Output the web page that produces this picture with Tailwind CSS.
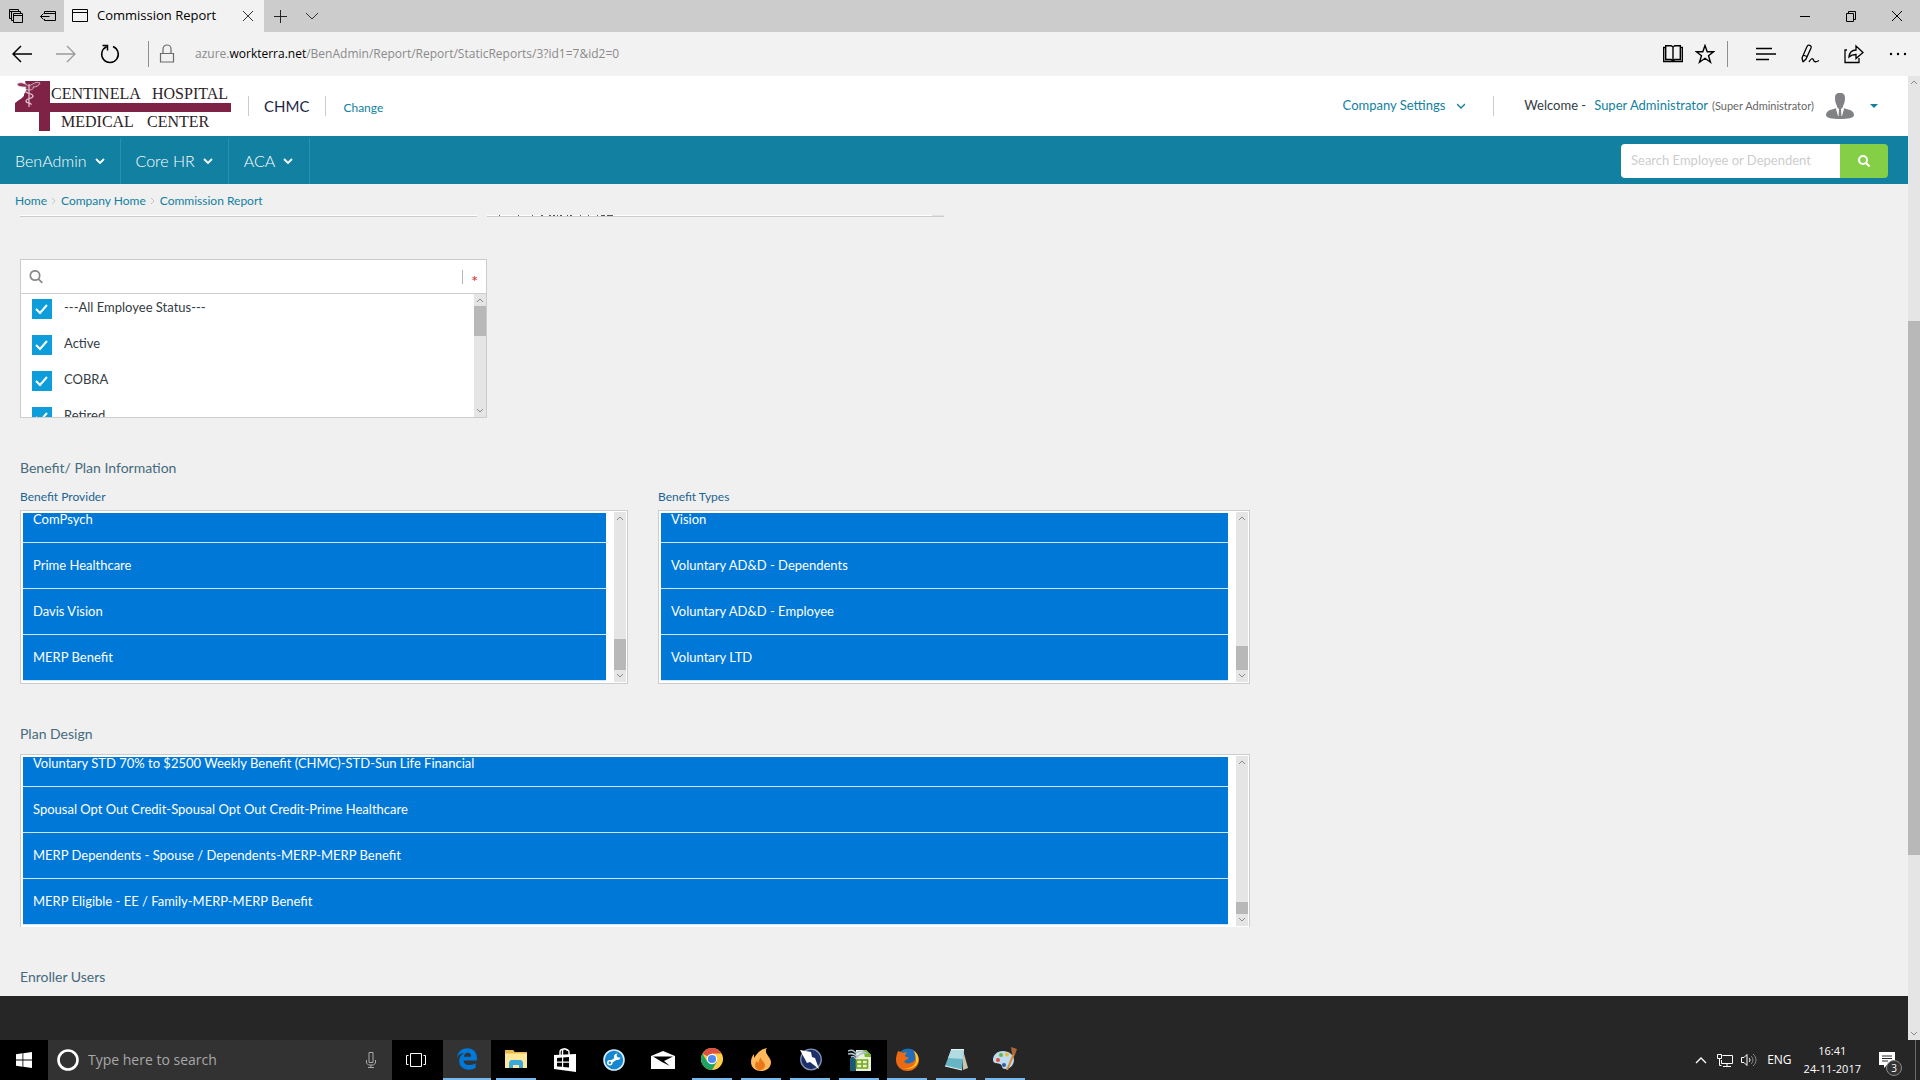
<!DOCTYPE html>
<html lang="en">
	<head>
		<meta charset="UTF-8" />
		<title>Commission Report</title>
		<script src="https://cdn.jsdelivr.net/npm/@tailwindcss/browser@4"></script>
	</head>
	<body class="h-screen flex flex-col overflow-hidden bg-[#f0f0f0] font-['Lato',sans-serif] text-[13px] text-[#333c44]">
		<!-- Browser tabs -->
		<div class="h-8 shrink-0 flex items-center bg-[#cccccc] text-black font-['Open_Sans',sans-serif]">
			<div class="w-16 flex items-center justify-between pl-2 pr-2">
				<button aria-label="Tabs you've set aside">
					<svg class="w-4 h-4" viewBox="0 0 16 16" fill="none" stroke="currentColor"><path d="M3.500 10.500h-2v-9h9v2M1 3.500h10M5.500 12.500h-2v-9h9v2" /><path d="M5.500 5.500h9v9h-9zM5 7.500h10" /></svg>
				</button>
				<button aria-label="Set these tabs aside">
					<svg class="w-4 h-4" viewBox="0 0 16 16" fill="none" stroke="currentColor"><path d="M4.500 6V3.500h11v9h-11V11M4 5.500h12M.5 8.500h9M3.500 5.500l-3 3 3 3" /></svg>
				</button>
			</div>
			<div class="w-[200px] h-full flex items-center bg-[#f2f2f2] pl-2 pr-2">
				<svg class="w-4 h-4" viewBox="0 0 16 16" fill="none" stroke="currentColor"><path d="M.5 1.500h15v12H.5zM0 4.500h16" /></svg>
				<span class="ml-[9px] flex-1 whitespace-nowrap">Commission Report</span>
				<button aria-label="Close tab"><svg class="w-4 h-4" viewBox="0 0 16 16" fill="none" stroke="#333"><path d="M3 3l10 10M13 3L3 13" /></svg></button>
			</div>
			<button class="ml-2" aria-label="New tab"><svg class="w-4 h-4" viewBox="0 0 16 16" fill="none" stroke="#222"><path d="M8.500 2v13M2 8.500h13" /></svg></button>
			<button class="ml-4" aria-label="Show tab previews"><svg class="w-4 h-4" viewBox="0 0 16 16" fill="none" stroke="#333"><path d="M2 5l6 6 6-6" /></svg></button>
			<div class="ml-auto flex items-center gap-[30px] pr-[15px]">
				<button aria-label="Minimize"><svg class="w-4 h-4" viewBox="0 0 16 16" stroke="currentColor"><path d="M3 8.500h10" /></svg></button>
				<button aria-label="Restore"><svg class="w-4 h-4" viewBox="0 0 16 16" fill="none" stroke="currentColor"><path d="M3.500 5.500h7v8h-7zM5.500 5V3.500h7v8H11" /></svg></button>
				<button aria-label="Close"><svg class="w-4 h-4" viewBox="0 0 16 16" stroke="currentColor"><path d="M3 3l10 10M13 3L3 13" /></svg></button>
			</div>
		</div>

		<!-- Address bar -->
		<div class="h-11 shrink-0 flex items-center bg-[#f2f2f2] text-black pl-3 pr-3 font-['Open_Sans',sans-serif]">
			<button aria-label="Back"><svg class="w-5 h-5" viewBox="0 0 20 20" fill="none" stroke="currentColor" stroke-width="1.500"><path d="M1 10h19M9 2l-8 8 8 8" /></svg></button>
			<button class="ml-6" aria-label="Forward"><svg class="w-5 h-5" viewBox="0 0 20 20" fill="none" stroke="#9a9a9a" stroke-width="1.300"><path d="M0 10h19M11 2l8 8-8 8" /></svg></button>
			<button class="ml-6" aria-label="Refresh"><svg class="w-5 h-5" viewBox="0 0 20 20" fill="none" stroke="currentColor" stroke-width="1.500"><path d="M13 2.500A8.300 8.300 0 1 1 6.500 2.700M2.500 1.500h5v5" /></svg></button>
			<span class="ml-7 w-px h-[26px] bg-[#8f8f8f]"></span>
			<svg class="ml-2 w-5 h-5" viewBox="0 0 20 20" fill="none" stroke="#6b6b6b" stroke-width="1.200"><path d="M3.500 9.500h13v8.500h-13zM6 9V5a4 4 0 0 1 8 0v4" /></svg>
			<div class="ml-[18px] text-xs whitespace-nowrap text-[#8a8a8a]">azure.<span class="text-black">workterra.net</span>/BenAdmin/Report/Report/StaticReports/3?id1=7&amp;id2=0</div>
			<div class="ml-auto flex items-center">
				<button aria-label="Reading view"><svg class="w-5 h-5" viewBox="0 0 20 20" fill="none" stroke="currentColor" stroke-width="1.400"><path d="M.7 3.500h2V1.700h5.500L10 3l1.800-1.300h5.500v1.800h2v14H.7zM2.700 3.500v12h5.500L10 17l1.800-1.500h5.500v-12M10 3v14" /></svg></button>
				<button class="ml-3" aria-label="Add to favorites"><svg class="w-5 h-5" viewBox="0 0 20 20" fill="none" stroke="currentColor" stroke-width="1.400"><path d="M10 1.500l2.200 6.200h6.500l-5.200 4 2 6.500-5.500-3.900-5.500 3.900 2-6.500-5.200-4h6.500z" /></svg></button>
				<span class="ml-3 w-px h-[26px] bg-[#8f8f8f]"></span>
				<button class="ml-7" aria-label="Hub"><svg class="w-5 h-5" viewBox="0 0 20 20" stroke="currentColor" stroke-width="1.300"><path d="M0 4.500h16M0 10h20M0 15.500h13" /></svg></button>
				<button class="ml-6" aria-label="Make a web note"><svg class="w-5 h-5" viewBox="0 0 20 20" fill="none" stroke="currentColor" stroke-width="1.300"><path d="M3 18L2 14 7 2.500C8 0 12 1.500 11 4L6 15 3 18M3 11l4 1.500M9 18c2-4 4-4 4.500-2s2 2.500 5.500.5" /></svg></button>
				<button class="ml-6" aria-label="Share"><svg class="w-5 h-5" viewBox="0 0 20 20" fill="none" stroke="currentColor" stroke-width="1.300"><path d="M3 6H1v12.500h14V14M5 13c.5-5 3-7 7-7V2l7 6.500-7 6v-4c-3 0-5 .5-7 2.500z" /></svg></button>
				<button class="ml-6" aria-label="More"><svg class="w-5 h-5" viewBox="0 0 20 20" fill="currentColor"><circle cx="3" cy="10" r="1.200" /><circle cx="10" cy="10" r="1.200" /><circle cx="17" cy="10" r="1.200" /></svg></button>
			</div>
		</div>

		<div class="flex-1 min-h-0 flex">
			<div class="flex-1 min-w-0 flex flex-col">
				<header class="h-[60px] shrink-0 flex items-center bg-white pl-[15px] pr-[30px]">
					<svg class="w-[216px] h-[50px] shrink-0" viewBox="0 0 216 50" role="img" aria-label="Centinela Hospital Medical Center">
						<path d="M24 0h11v22h181v9H35v19H24V31H0v-9L9 15V0z" fill="#7f2346" />
						<path d="M0 0h10l2 8-5 9-7 4z" fill="#fff" />
						<path d="M2 3c4-3 8 0 12 2 4-2 7-5 11-3-1 3-4 4-7 4 1 2-1 3-4 3s-4-1-3-3c-4 0-8 0-9-3z" fill="#8a3155" stroke="#e9cfda" stroke-width=".8" />
						<path d="M14 3v23M10 10c1 3 8 2 8 5s-7 2-7 5 6 1 5 4" fill="none" stroke="#e6c3d1" stroke-width="1.200" />
						<g fill="#2b2327" font-family="Liberation Serif, serif" font-size="16"><text x="36" y="18">CENTINELA</text><text x="137" y="18">HOSPITAL</text><text x="46" y="46">MEDICAL</text><text x="132" y="46">CENTER</text></g>
					</svg>
					<span class="ml-[17px] w-px h-5 bg-[#cccccc]"></span>
					<span class="ml-[15px] text-[15px] text-[#1d2545]">CHMC</span>
					<span class="ml-4 w-px h-5 bg-[#cccccc]"></span>
					<a href="#" class="ml-[17px] pt-1 text-xs text-[#1280a1]">Change</a>
					<div class="ml-auto flex items-center whitespace-nowrap">
						<a href="#" class="flex items-center gap-3 text-[#1280a1]">Company Settings
							<svg class="w-2 h-2" viewBox="0 0 8 8" fill="none" stroke="currentColor" stroke-width="1.400"><path d="M0 2l4 4 4-4" /></svg>
						</a>
						<span class="ml-7 w-px h-5 bg-[#cccccc]"></span>
						<span class="ml-[30px]">Welcome -</span>
						<a href="#" class="ml-2 text-[#1280a1]">Super Administrator</a>
						<span class="ml-1 text-[11px] text-[#666]">(Super Administrator)</span>
						<svg class="ml-3 w-7 h-[26px]" viewBox="0 0 28 26" fill="#808285"><path d="M14 0c4 0 5 2 5 5 0 4-1 6-2 8v2l7 2c3 1 4 3 4 5 0 3-6 4-14 4S0 25 0 22c0-2 1-4 4-5l7-2v-2c-1-2-2-4-2-8 0-3 1-5 5-5z" /><path d="M11 14l3 3 3-3 1 2-2 7h-4l-2-7z" fill="#fff" /><path d="M13 16h2l.5 8h-3z" /></svg>
						<button class="ml-4" aria-label="User menu"><svg class="w-2 h-2" viewBox="0 0 8 8" fill="#1280a1"><path d="M0 2h8L4 6z" /></svg></button>
					</div>
				</header>

				<nav class="h-12 shrink-0 flex items-center justify-between bg-[#1280a1] pt-[2px] pr-5 text-base font-light text-white">
					<div class="flex h-full">
						<button class="flex items-center gap-2 pl-[15px] pr-[15px] border-r border-[#2b8fae]">BenAdmin <svg class="w-[10px] h-[10px]" viewBox="0 0 10 10" fill="none" stroke="currentColor" stroke-width="1.800"><path d="M1 3l4 4 4-4" /></svg></button>
						<button class="flex items-center gap-2 pl-[15px] pr-[15px] border-r border-[#2b8fae]">Core HR <svg class="w-[10px] h-[10px]" viewBox="0 0 10 10" fill="none" stroke="currentColor" stroke-width="1.800"><path d="M1 3l4 4 4-4" /></svg></button>
						<button class="flex items-center gap-2 pl-[15px] pr-4 border-r border-[#2b8fae]">ACA <svg class="w-[10px] h-[10px]" viewBox="0 0 10 10" fill="none" stroke="currentColor" stroke-width="1.800"><path d="M1 3l4 4 4-4" /></svg></button>
					</div>
					<form class="flex h-[34px] text-[13px] rounded overflow-hidden">
						<input type="text" aria-label="Search Employee or Dependent" placeholder="Search Employee or Dependent" class="w-[219px] bg-white px-[10px] font-normal placeholder:text-[#cdcdcd]" />
						<button type="button" aria-label="Search" class="w-12 flex items-center justify-center bg-[#84cf45]">
							<svg class="w-3 h-3" viewBox="0 0 12 12" fill="none" stroke="white" stroke-width="2"><circle cx="5" cy="5" r="4" /><path d="M8 8l3.500 3.500" /></svg>
						</button>
					</form>
				</nav>

				<div class="h-[31px] shrink-0 flex items-center gap-[5px] px-[15px] pt-[3px] text-xs text-[#1280a1]">
					<a href="#">Home</a>
					<svg class="w-1 h-2" viewBox="0 0 4 8" fill="none" stroke="#c4c4c4"><path d="M0 1l3 3-3 3" /></svg>
					<a href="#">Company Home</a>
					<svg class="w-1 h-2" viewBox="0 0 4 8" fill="none" stroke="#c4c4c4"><path d="M0 1l3 3-3 3" /></svg>
					<a href="#">Commission Report</a>
				</div>

				<main class="flex-1 min-h-0 overflow-hidden px-5">
					<div class="flex gap-[10px]">
						<div class="w-[457px] h-[2px] bg-white border-b border-[#cccccc]"></div>
						<div class="w-[457px] h-[2px] bg-white border-b border-[#cccccc]">
							<svg class="w-full h-px" viewBox="0 0 457 1" preserveAspectRatio="none"><path d="M12 .5h1M31 .5h1M45 .5h1M54 .5h2M62 .5h2M66 .5h2M70 .5h1M73 .5h2M80 .5h1M83 .5h2M93 .5h1M101 .5h1M110 .5h1M114 .5h4M120 .5h6" stroke="#555" /><path d="M445 .5h12" stroke="#e2e2e2" /></svg>
						</div>
					</div>

					<section class="mt-[42px] w-[467px] h-[159px] border border-[#cccccc] bg-white flex flex-col">
						<div class="h-[34px] shrink-0 flex items-center border-b border-[#cccccc] pl-2 pr-2">
							<svg class="w-[14px] h-[14px]" viewBox="0 0 14 14" fill="none" stroke="#888" stroke-width="1.700"><circle cx="6" cy="5.500" r="4.700" /><path d="M9.300 8.800l4 4" /></svg>
							<input type="text" aria-label="Search employee status" class="flex-1 mx-3 h-6 outline-none" />
							<span class="w-px h-[14px] bg-[#b5b5b5]"></span>
							<span class="ml-2 pt-2 text-base leading-4 text-[#e02020]">*</span>
						</div>
						<div class="flex-1 min-h-0 flex">
							<div id="statusList" class="flex-1 overflow-hidden pl-[11px] pt-[5px]"></div>
							<div class="w-3 flex flex-col items-center bg-[#e5e5e5]">
								<svg class="w-2 h-3 shrink-0" viewBox="0 0 8 12" fill="none" stroke="#8a8a8a"><path d="M1 8l3-3 3 3" /></svg>
								<div class="w-3 h-[30px] bg-[#b8b8b8]"></div>
								<svg class="w-2 h-3 mt-auto shrink-0" viewBox="0 0 8 12" fill="none" stroke="#8a8a8a"><path d="M1 4l3 3 3-3" /></svg>
							</div>
						</div>
					</section>

					<h2 class="mt-[38px] text-sm leading-6 text-[#456a7c]">Benefit/ Plan Information</h2>
					<div class="mt-[9px] flex gap-[30px] max-w-[1230px]">
						<div class="w-[608px]">
							<label for="provider" class="block text-xs leading-4 text-[#1d6491]">Benefit Provider</label>
							<div class="mt-[5px] h-[174px] flex border border-[#cccccc] bg-white p-px">
								<select id="provider" multiple class="flex-1 min-w-0 m-px p-0 overflow-y-auto [scrollbar-width:none] outline-none"></select>
								<div class="ml-[7px] w-3 flex flex-col items-center bg-[#e5e5e5]">
									<svg class="w-2 h-3 shrink-0" viewBox="0 0 8 12" fill="none" stroke="#8a8a8a"><path d="M1 8l3-3 3 3" /></svg>
									<div class="mt-auto w-3 h-[31px] shrink-0 bg-[#b8b8b8]"></div>
									<svg class="w-2 h-3 shrink-0" viewBox="0 0 8 12" fill="none" stroke="#8a8a8a"><path d="M1 4l3 3 3-3" /></svg>
								</div>
							</div>
						</div>
						<div class="flex-1">
							<label for="types" class="block text-xs leading-4 text-[#1d6491]">Benefit Types</label>
							<div class="mt-[5px] h-[174px] flex border border-[#cccccc] bg-white p-px">
								<select id="types" multiple class="flex-1 min-w-0 m-px p-0 overflow-y-auto [scrollbar-width:none] outline-none"></select>
								<div class="ml-[7px] w-3 flex flex-col items-center bg-[#e5e5e5]">
									<svg class="w-2 h-3 shrink-0" viewBox="0 0 8 12" fill="none" stroke="#8a8a8a"><path d="M1 8l3-3 3 3" /></svg>
									<div class="mt-auto w-3 h-6 shrink-0 bg-[#b8b8b8]"></div>
									<svg class="w-2 h-3 shrink-0" viewBox="0 0 8 12" fill="none" stroke="#8a8a8a"><path d="M1 4l3 3 3-3" /></svg>
								</div>
							</div>
						</div>
					</div>

					<h2 class="mt-[38px] text-sm leading-6 text-[#456a7c]"><label for="plans">Plan Design</label></h2>
					<div class="mt-2 h-[173px] max-w-[1230px] flex border border-b-0 border-[#cccccc] bg-white p-px">
						<select id="plans" multiple class="flex-1 min-w-0 m-px p-0 overflow-y-auto [scrollbar-width:none] outline-none"></select>
						<div class="ml-[7px] w-3 flex flex-col items-center bg-[#e5e5e5]">
							<svg class="w-2 h-3 shrink-0" viewBox="0 0 8 12" fill="none" stroke="#8a8a8a"><path d="M1 8l3-3 3 3" /></svg>
							<div class="mt-auto w-3 h-3 shrink-0 bg-[#b8b8b8]"></div>
							<svg class="w-2 h-3 shrink-0" viewBox="0 0 8 12" fill="none" stroke="#8a8a8a"><path d="M1 4l3 3 3-3" /></svg>
						</div>
					</div>
					<h2 class="mt-[38px] text-sm leading-6 text-[#456a7c]">Enroller Users</h2>
				</main>
				<footer class="h-11 shrink-0 bg-[#262626]"></footer>
			</div>

			<!-- Page scrollbar -->
			<div class="w-3 shrink-0 flex flex-col items-center bg-[#e5e5e5]">
				<svg class="w-2 h-3 shrink-0" viewBox="0 0 8 12" fill="none" stroke="#8a8a8a"><path d="M1 8l3-3 3 3" /></svg>
				<div class="flex-[233]"></div>
				<div class="w-3 flex-[534] bg-[#b8b8b8]"></div>
				<div class="flex-[173]"></div>
				<svg class="w-2 h-3 shrink-0" viewBox="0 0 8 12" fill="none" stroke="#8a8a8a"><path d="M1 4l3 3 3-3" /></svg>
			</div>
		</div>

		<!-- Taskbar -->
		<div class="h-10 shrink-0 flex bg-[#262626] text-white font-['Open_Sans',sans-serif]">
			<div class="flex bg-black">
				<button aria-label="Start" class="w-12 flex items-center justify-center"><svg class="w-4 h-4" viewBox="0 0 16 16" fill="white"><path d="M0 2.200L6.500 1.300v6.300H0zM7.300 1.200L16 0v7.600H7.300zM0 8.400h6.500v6.300L0 13.800zM7.300 8.400H16V16l-8.700-1.200z" /></svg></button>
				<div class="w-[344px] flex items-center bg-[#323232] pl-2 pr-4">
					<svg class="w-6 h-6" viewBox="0 0 24 24" fill="none" stroke="white" stroke-width="2.600"><circle cx="12" cy="12" r="9.500" /></svg>
					<input type="text" aria-label="Type here to search" placeholder="Type here to search" class="ml-2 flex-1 min-w-0 text-sm placeholder:text-[#a8a8a8]" />
					<svg class="w-[10px] h-4" viewBox="0 0 10 16" fill="none" stroke="#a8a8a8"><path d="M3 .5h4v10H3zM.5 8v3l2 2h5l2-2V8M5 13v2.500M2 15.500h6" /></svg>
				</div>
				<button aria-label="Task view" class="w-12 mr-[3px] flex items-center justify-center"><svg class="w-5 h-4" viewBox="0 0 20 16" fill="none" stroke="white"><path d="M4.500 1.500h11v13h-11zM2.500 3.500h-2v9h2M17.500 3.500h2v9h-2" /></svg></button>
				<button aria-label="Edge" class="w-12 mr-px flex items-center justify-center bg-[#333] border-b-2 border-[#76b9ed]">
					<svg class="w-5 h-[22px]" viewBox="0 0 20 22" fill="#0078d7"><path d="M0 9.800C.6 4 4.500.2 10.300.2 16.500.2 20 4.500 20 10v2.400H6.700c.1 3 2.400 4.600 5.800 4.600 2.400 0 4.500-.6 6.200-1.700v4.500C16.900 21 14.500 21.700 11.800 21.700 6 21.700 2.200 18.400 2.200 13c0-3.500 1.800-6.300 4.800-7.900C3.500 5.200 1.500 7 0 9.800zM6.900 8.700h7.200c0-2.300-1.100-3.900-3.400-3.900-2.100 0-3.400 1.700-3.800 3.900z" /></svg>
				</button>
				<button aria-label="File Explorer" class="w-10 ml-1 mr-[5px] flex items-center justify-center border-b-2 border-[#76b9ed]">
					<svg class="w-[22px] h-[18px]" viewBox="0 0 22 18"><path d="M0 0h8l1.500 2H22v16H0z" fill="#ffe89b" /><path d="M0 0h8l1.500 2H22v1.500H0z" fill="#e8b94c" /><path d="M4 18v-6l2-2h10l2 2v6h-4v-3H8v3z" fill="#3ca9dc" /></svg>
				</button>
				<button aria-label="Store" class="w-12 mr-px flex items-center justify-center"><svg class="w-[22px] h-6" viewBox="0 0 22 24"><path d="M0 7l22-1v18L0 21z" fill="white" /><path d="M6 7V4c0-4 9-4 9 0v3M8.500 7V3c0-3 4-3 5 0" fill="none" stroke="white" stroke-width="1.400" /><path d="M3 10l5-.4v4H3zM9.200 9.500L15 9v4.600H9.200zM3 14.800h5v4l-5-.4zM9.200 14.800H15v4.600l-5.800-.5z" fill="black" /></svg></button>
				<button aria-label="Support" class="w-12 mr-px flex items-center justify-center"><svg class="w-[22px] h-[22px]" viewBox="0 0 22 22"><circle cx="11" cy="11" r="10" fill="#1488d0" stroke="#d9efff" stroke-width="1.600" /><path d="M6.500 13.800l8-5.200" stroke="white" stroke-width="2.600" /><circle cx="6.800" cy="13.700" r="2" fill="#1488d0" stroke="white" stroke-width="1.500" /><path d="M17.500 8.500a3.300 3.300 0 1 1-3-4l-1 2.500 1.500 1.500z" fill="white" /></svg></button>
				<button aria-label="Mail" class="w-12 mr-px flex items-center justify-center"><svg class="w-6 h-5" viewBox="0 0 24 20"><path d="M0 6l12-5 12 5v13H0z" fill="white" /><path d="M2 6.500h20l-9 4.500 6 5-8-4z" fill="black" /></svg></button>
				<button aria-label="Chrome" class="w-10 ml-1 mr-[5px] flex items-center justify-center border-b-2 border-[#76b9ed]"><svg class="w-[22px] h-[22px]" viewBox="0 0 22 22"><circle cx="11" cy="11" r="11" fill="#ffcd46" /><path d="M11 11L1.500 5.500A11 11 0 0 1 20.500 5.500H11z" fill="#dd5144" /><path d="M1.500 5.500A11 11 0 0 0 11 22l5-8.500-9.500.5z" fill="#1da362" /><circle cx="11" cy="11" r="5.200" fill="white" /><circle cx="11" cy="11" r="4.100" fill="#4c8bf5" /></svg></button>
				<button aria-label="Flame" class="w-10 ml-1 mr-[5px] flex items-center justify-center border-b-2 border-[#76b9ed]"><svg class="w-5 h-[23px]" viewBox="0 0 20 23"><path d="M16 0c-4 5 4 9 4 14 0 6-5 9-10 9S0 20 0 14c0-3 1-6 3-8v4C5 7 9 1 16 0z" fill="#ffb95a" /><path d="M10 9c-1 3 4 5 4 8s-2 5-5 5-5-2-5-5c0-2 1-3 2-4l1 2c1-1 1-4 3-6z" fill="#e9781b" /></svg></button>
				<button aria-label="Zap" class="w-10 ml-1 mr-[5px] flex items-center justify-center border-b-2 border-[#76b9ed]"><svg class="w-[23px] h-[23px]" viewBox="0 0 23 23"><circle cx="12" cy="11.500" r="10.300" fill="#1b2f68" stroke="#8391b3" stroke-width="1.300" /><path d="M1 2l11 2 1 5 3 1 4 11-9-7-3 1z" fill="white" /></svg></button>
				<button aria-label="OpenOffice" class="w-10 ml-1 mr-[5px] flex items-center justify-center border-b-2 border-[#76b9ed]"><svg class="w-[23px] h-[23px]" viewBox="0 0 23 23"><path d="M2 10h6v13H2z" fill="#1b5876" /><path d="M8 2h10l5 5v16H8z" fill="#e9f3dc" /><path d="M15 2h3l5 5v2h-6z" fill="#78b82a" /><path d="M0 3c4-2 6 0 8 2 3-2 7-2 10 0-5 0-7 1-9 4-2-3-5-4-9-3M3 9c2-1 4 0 5 2" fill="none" stroke="#a9bfcb" stroke-width="1.500" /><path d="M8.500 12h11v8h-11zM14 12v8M8.500 16h11" fill="none" stroke="#75a818" stroke-width="1.600" /></svg></button>
				<div class="w-[3px]"></div>
			</div>
			<button aria-label="Firefox" class="w-10 mr-[5px] flex items-center justify-center border-b-2 border-[#76b9ed]"><svg class="w-[23px] h-[23px]" viewBox="0 0 23 23"><circle cx="12" cy="11" r="10.500" fill="#1f6fb8" /><path d="M2 3c2 1 3 1 5 2 2-1 3-1 4 0-1 1-3 2-1 4 2 0 3 0 2 2l-4 2c2 4 8 3 11-1 1-4 0-7-2-10 4 3 6 6 6 10 0 6-5 11-11.500 11S0 18 0 12c0-4 1-6 2-9z" fill="#ee6a12" /><path d="M18 3c4 3 5 7 4 11-2 6-9 8-14 6 7 1 12-3 12-8 0-4-1-6-2-9z" fill="#ffc928" /></svg></button>
			<button aria-label="Notepad" class="w-10 ml-1 mr-[5px] flex items-center justify-center border-b-2 border-[#76b9ed]"><svg class="w-[23px] h-[23px]" viewBox="0 0 23 23"><path d="M18 2l5 18-5 2z" fill="#c9c4ae" /><path d="M6 2h13l-2 20-17-4z" fill="#66b5c4" /><path d="M6 2h13l-1 9-15-1z" fill="#b3dce2" /><path d="M6 1.500h13M0 18l17 4" stroke="#e8f6f7" stroke-width="1.200" /></svg></button>
			<button aria-label="Paint" class="w-10 ml-1 flex items-center justify-center border-b-2 border-[#76b9ed]"><svg class="w-6 h-6" viewBox="0 0 24 24"><path d="M10 4c6 0 11 4 11 9s-4 9-9 9c-4 0-2-4-5-5-2-1-7 0-7-4 0-5 4-9 10-9z" fill="#bfdcee" /><circle cx="5" cy="13" r="2" fill="#e24f43" /><circle cx="8" cy="8" r="2" fill="#63b548" /><circle cx="14" cy="7.500" r="2" fill="#f4b92e" /><circle cx="11" cy="18" r="2" fill="#315d9b" /><path d="M13 23l7-17 2 1-7 16z" fill="#d98b3c" /><path d="M18 0l6 2-2 6-3-1z" fill="#a86639" /></svg></button>

			<div class="ml-auto flex items-center">
				<button aria-label="Show hidden icons"><svg class="w-3 h-3" viewBox="0 0 12 12" fill="none" stroke="white" stroke-width="1.300"><path d="M1 9l5-5 5 5" /></svg></button>
				<svg class="ml-[10px] w-4 h-4" viewBox="0 0 16 16" fill="none" stroke="white"><path d="M5.500 3.500h10v8h-11V8M10 12v2.500M6 14.500h8M.5 2.500h4v4h-4zM2.500 7v6.500h2" /></svg>
				<svg class="ml-2 w-4 h-4" viewBox="0 0 16 16" fill="none" stroke="white"><path d="M.5 5.500h2.500l3-3v11l-3-3H.5zM8 6c1.300 1 1.300 3 0 4" /><path d="M10 4c2.500 2 2.500 6 0 8M12 2c4 3.500 4 8.500 0 12" stroke="#8a8a8a" /></svg>
				<span class="ml-[10px] text-xs">ENG</span>
				<div class="ml-3 text-center text-[11px] leading-[18px]">16:41<br />24-11-2017</div>
				<div class="relative ml-[18px] mr-5">
					<svg class="w-4 h-4" viewBox="0 0 16 16"><path d="M0 0h16v13H8l-3 3v-3H0z" fill="white" /><path d="M3 4h10M3 6.500h10M3 9h6" stroke="#262626" /></svg>
					<span class="absolute left-[7px] top-2 w-4 h-4 rounded-full border border-[#8a8a8a] bg-[#333] text-[10px] leading-[14px] text-center">3</span>
				</div>
				<span class="w-px mr-1 h-10 bg-[#6a6a6a]"></span>
			</div>
		</div>

		<script>
			const statuses = ["---All Employee Status---", "Active", "COBRA", "Retired"];

			const options = {
				provider: ["ComPsych", "Prime Healthcare", "Davis Vision", "MERP Benefit"],
				types: ["Vision", "Voluntary AD&D - Dependents", "Voluntary AD&D - Employee", "Voluntary LTD"],
				plans: [
					"Voluntary STD 70% to $2500 Weekly Benefit (CHMC)-STD-Sun Life Financial",
					"Spousal Opt Out Credit-Spousal Opt Out Credit-Prime Healthcare",
					"MERP Dependents - Spouse / Dependents-MERP-MERP Benefit",
					"MERP Eligible - EE / Family-MERP-MERP Benefit",
				],
			};

			const renderStatuses = () => {
				let content = "";
				statuses.forEach((name, i) => {
					content += `<label for="status${i}" class="h-9 flex items-start gap-3">
						<span class="relative w-5 h-5">
							<input id="status${i}" type="checkbox" checked class="appearance-none block w-5 h-5 bg-[#0d9ddb]" />
							<svg class="absolute inset-0 w-5 h-5 pointer-events-none" viewBox="0 0 20 20" fill="none" stroke="white" stroke-width="2"><path d="M4 10l4 4 7-8" /></svg>
						</span>
						<span class="leading-4">${name}</span>
					</label>`;
				});
				document.getElementById("statusList").innerHTML = content;
			};

			const renderOptions = (id) => {
				const select = document.getElementById(id);
				options[id].forEach((name) => {
					const option = document.createElement("option");
					option.textContent = name;
					option.className =
						"h-[46px] px-[10px] pt-[14px] pb-0 leading-4 text-[13px] border-b border-[#cfe6f8] bg-[linear-gradient(#0078d7,#0078d7)] [-webkit-text-fill-color:white]";
					option.selected = true;
					select.appendChild(option);
				});
			};

			// a list box jumps to its first selected option on layout, so scroll after that
			const scrollToEnd = () => {
				document.querySelectorAll("select").forEach((select) => {
					select.scrollTop = select.scrollHeight;
				});
			};

			renderStatuses();
			Object.keys(options).forEach(renderOptions);
			requestAnimationFrame(() => requestAnimationFrame(scrollToEnd));
			window.addEventListener("load", scrollToEnd);
		</script>
	</body>
</html>
